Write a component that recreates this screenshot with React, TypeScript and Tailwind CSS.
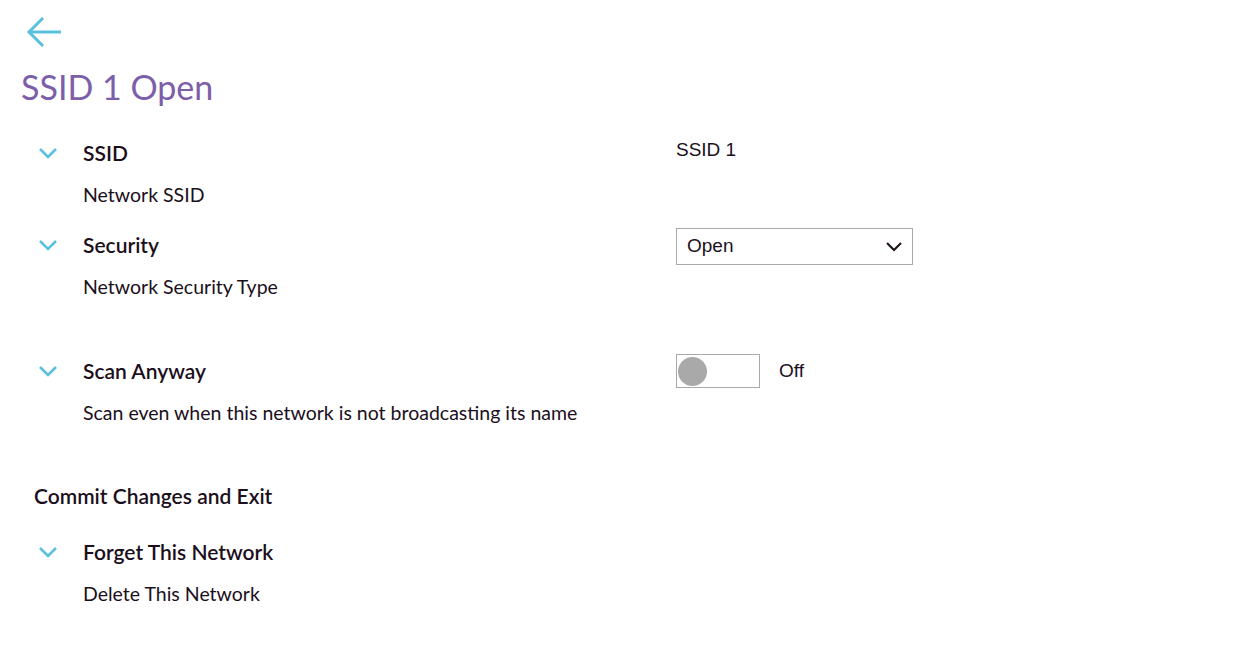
import React from "react";

const Chevron = () => (
  <svg width="20" height="14" viewBox="0 0 20 14" className="shrink-0">
    <polyline points="2,3 10,11 18,3" fill="none" stroke="#5bc0de" strokeWidth="2.6" />
  </svg>
);

function Row({
  title,
  desc,
  right,
  gapTop,
}: {
  title: string;
  desc: string;
  right?: React.ReactNode;
  gapTop: string;
}) {
  return (
    <div className={`flex ${gapTop}`}>
      <div className="w-[676px] shrink-0 pl-[38px]">
        <div className="flex h-[28px] items-center">
          <div className="w-[45px]">
            <Chevron />
          </div>
          <div className="text-[21px] font-semibold leading-[28px] text-[#1b0f1c]">{title}</div>
        </div>
        <div className="mt-[16px] pl-[45px] text-[19.5px] leading-[24px] text-[#1b0f1c]">{desc}</div>
      </div>
      <div className="flex-1">{right}</div>
    </div>
  );
}

export default function App() {
  return (
    <div className="min-h-[662px] w-full bg-white" style={{ fontFamily: "Lato, 'Noto Sans', sans-serif" }}>
      <div className="pl-[26px] pt-[16px]">
        <svg width="36" height="32" viewBox="0 0 36 32">
          <line x1="3" y1="16" x2="35" y2="16" stroke="#5bc0de" strokeWidth="3" />
          <polyline points="17,2 3,16 17,30" fill="none" stroke="#5bc0de" strokeWidth="3" />
        </svg>
      </div>
      <h1 className="mt-[19px] pl-[21px] text-[34px] font-normal leading-[40px] text-[#7d5ea9]">SSID 1 Open</h1>

      <Row
        gapTop="mt-[32px]"
        title="SSID"
        desc="Network SSID"
        right={
          <div className="-mt-[3px] text-[19px] leading-[28px] text-[#1b0f1c]" style={{ fontFamily: "'Liberation Sans', Arial, sans-serif" }}>
            SSID 1
          </div>
        }
      />
      <Row
        gapTop="mt-[24px]"
        title="Security"
        desc="Network Security Type"
        right={
          <div
            className="-mt-[3px] flex h-[37px] w-[237px] items-center justify-between border border-[#a9a9a9] pl-[10px] pr-[9px] text-[19px] text-[#1b0f1c]"
            style={{ fontFamily: "'Liberation Sans', Arial, sans-serif" }}
          >
            <span>Open</span>
            <svg width="18" height="12" viewBox="0 0 18 12">
              <polyline points="2,2 9,9 16,2" fill="none" stroke="#1b0f1c" strokeWidth="2" />
            </svg>
          </div>
        }
      />
      <Row
        gapTop="mt-[58px]"
        title="Scan Anyway"
        desc="Scan even when this network is not broadcasting its name"
        right={
          <div className="-mt-[3px] flex items-center">
            <div className="flex h-[34px] w-[84px] items-center border border-[#a9a9a9] pl-[1px]">
              <div className="h-[29px] w-[29px] rounded-full bg-[#a9a9a9]" />
            </div>
            <span className="ml-[19px] text-[19px] text-[#1b0f1c]" style={{ fontFamily: "'Liberation Sans', Arial, sans-serif" }}>
              Off
            </span>
          </div>
        }
      />
      <div className="mt-[57px] pl-[34px] text-[21px] font-semibold leading-[28px] text-[#1b0f1c]">Commit Changes and Exit</div>
      <Row gapTop="mt-[28px]" title="Forget This Network" desc="Delete This Network" />
    </div>
  );
}
